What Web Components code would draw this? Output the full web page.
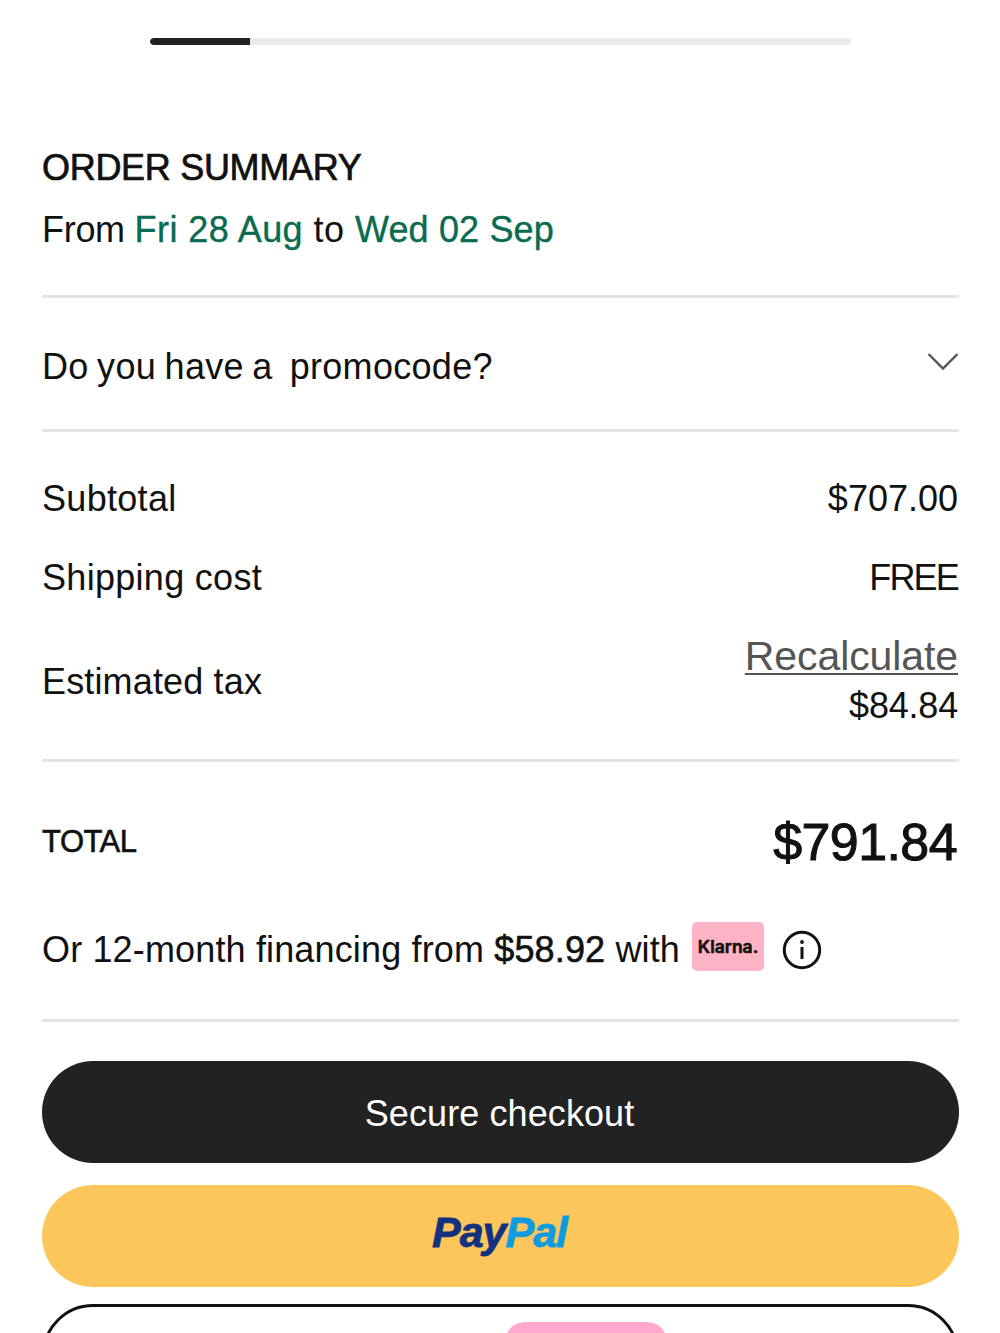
<!DOCTYPE html>
<html>
<head>
<meta charset="utf-8">
<style>
html, body { margin: 0; height: 1333px; overflow: hidden; background: #fff; }
body { font-family: "Liberation Sans", Arial, sans-serif; font-size: 36px; color: #111; }
</style>
</head>
<body>
<checkout-page>
  <checkout-progress></checkout-progress>
  <summary-heading></summary-heading>
  <promo-row></promo-row>
  <section-block pad="46px 0 32px">
    <price-row label="Subtotal" gap="37px">$707.00</price-row>
    <price-row label="Shipping cost" gap="34px"><span style="letter-spacing:-1.8px">FREE</span></price-row>
    <tax-row></tax-row>
  </section-block>
  <total-row></total-row>
  <financing-row></financing-row>
  <pay-button kind="dark">Secure checkout</pay-button>
  <pay-button kind="paypal"><paypal-logo></paypal-logo></pay-button>
  <pay-button kind="outline"></pay-button>
</checkout-page>

<script>
function shadow(el, html) {
  el.attachShadow({ mode: 'open' }).innerHTML = html;
}

class CheckoutPage extends HTMLElement {
  connectedCallback() {
    shadow(this, `<style>
      :host { display: block; padding: 0 41px 0 42px; height: 1333px; box-sizing: border-box; overflow: hidden; }
    </style><slot></slot>`);
  }
}

class CheckoutProgress extends HTMLElement {
  connectedCallback() {
    shadow(this, `<style>
      :host { display: block; padding-top: 38px; margin: 0 108px 0 108px; }
      .track { height: 7px; background: #ebebeb; border-radius: 4px; overflow: hidden; }
      .fill { width: 100px; height: 100%; background: #222; border-radius: 4px 0 0 4px; }
    </style><div class="track"><div class="fill"></div></div>`);
  }
}

class SummaryHeading extends HTMLElement {
  connectedCallback() {
    shadow(this, `<style>
      :host { display: block; padding: 102px 0 44px; border-bottom: 3px solid #e4e4e4; }
      h2 { margin: 0 0 20px; font-size: 36px; line-height: 42px; font-weight: 400; color: #111; -webkit-text-stroke: 0.7px #111; letter-spacing: -0.3px; }
      p { margin: 0; font-size: 36px; line-height: 42px; }
      b { font-weight: 400; color: #0b6b50; -webkit-text-stroke: 0.4px #0b6b50; }
      .from { letter-spacing: -0.3px; }
      .to { letter-spacing: 0.45px; }
      .d1 { letter-spacing: 0.45px; }
      .d2 { letter-spacing: 0.15px; }
    </style><h2>ORDER SUMMARY</h2><p><span class="from">From </span><b class="d1">Fri 28 Aug</b><span class="to"> to </span><b class="d2">Wed 02 Sep</b></p>`);
  }
}

class PromoRow extends HTMLElement {
  connectedCallback() {
    shadow(this, `<style>
      :host { display: flex; justify-content: space-between; align-items: center; height: 131px; border-bottom: 3px solid #e4e4e4; font-size: 36px; letter-spacing: 0.3px; word-spacing: -1.8px; }
      span { white-space: pre; margin-top: 6px; }
      svg { width: 32px; height: 20px; margin-top: -4px; }
    </style><span>Do you have a  promocode?</span>
    <svg viewBox="0 0 32 20" fill="none" stroke="#555" stroke-width="2.4"><path d="M1.5 2 16 16.5 30.5 2"/></svg>`);
  }
}

class SectionBlock extends HTMLElement {
  connectedCallback() {
    shadow(this, `<style>
      :host { display: block; padding: ${this.getAttribute('pad')}; padding-right: 1px; border-bottom: 3px solid #e4e4e4; }
    </style><slot></slot>`);
  }
}

class PriceRow extends HTMLElement {
  connectedCallback() {
    shadow(this, `<style>
      :host { display: flex; justify-content: space-between; align-items: center; height: 42px; margin-bottom: ${this.getAttribute('gap')}; line-height: 42px; font-size: 36px; }
      .l { letter-spacing: 0.3px; }
    </style><span class="l">${this.getAttribute('label')}</span><span><slot></slot></span>`);
  }
}

class TaxRow extends HTMLElement {
  connectedCallback() {
    shadow(this, `<style>
      :host { display: flex; justify-content: space-between; align-items: center; font-size: 36px; }
      .right { display: flex; flex-direction: column; align-items: flex-end; }
      a { color: #555; font-size: 41px; line-height: 46px; letter-spacing: -0.1px; text-decoration: underline; text-decoration-thickness: 2px; text-underline-offset: 3px; }
      .tax { line-height: 42px; margin-top: 6px; letter-spacing: -0.2px; }
      .label { margin-top: 4px; letter-spacing: 0.15px; }
    </style><span class="label">Estimated tax</span>
    <div class="right"><a>Recalculate</a><span class="tax">$84.84</span></div>`);
  }
}

class TotalRow extends HTMLElement {
  connectedCallback() {
    shadow(this, `<style>
      :host { display: flex; justify-content: space-between; align-items: center; height: 160px; padding-right: 2px; }
      .l { font-size: 31px; -webkit-text-stroke: 0.6px #111; letter-spacing: -0.5px; }
      .r { font-size: 52px; -webkit-text-stroke: 1px #111; letter-spacing: -0.6px; }
    </style><span class="l">TOTAL</span><span class="r">$791.84</span>`);
  }
}

class FinancingRow extends HTMLElement {
  connectedCallback() {
    shadow(this, `<style>
      :host { display: flex; align-items: center; height: 56px; padding-bottom: 41px; border-bottom: 3px solid #e4e4e4; font-size: 36px; letter-spacing: 0.15px; white-space: pre; }
      b { font-weight: 400; -webkit-text-stroke: 0.6px #111; }
      .badge { display: flex; align-items: center; justify-content: center; width: 72px; height: 49px; margin: -8px 0 0 12px; border-radius: 5px; background: #ffb3c7; font-size: 17.5px; -webkit-text-stroke: 0.6px #111; letter-spacing: 0; font-family: "Inter", "Liberation Sans", sans-serif; font-weight: 600; color: #17120f; }
      svg { width: 40px; height: 40px; margin-left: 18px; }
    </style><span>Or 12-month financing from <b>$58.92</b> with</span>
    <span class="badge">Klarna.</span>
    <svg viewBox="0 0 40 40" fill="none" stroke="#111">
      <circle cx="20" cy="20" r="17.7" stroke-width="3"/>
      <path d="M20 17v12" stroke-width="3"/>
      <circle cx="20" cy="12" r="1.9" fill="#111" stroke="none"/>
    </svg>`);
  }
}

class PayButton extends HTMLElement {
  connectedCallback() {
    const kind = this.getAttribute('kind');
    shadow(this, `<style>
      :host { display: flex; align-items: center; justify-content: center; height: 102px; border-radius: 51px; box-sizing: border-box; font-size: 36px; letter-spacing: 0.1px; overflow: hidden; }
      :host([kind=dark]) { margin-top: 39px; padding: 4px 2px 0 0; background: #222; color: #fff; }
      :host([kind=paypal]) { margin-top: 22px; background: #fcc65b; }
      :host([kind=outline]) { margin-top: 17px; border: 3px solid #111; background: #fff; align-items: flex-start; padding-top: 15px; }
      .pill { width: 162px; height: 40px; margin-left: 170px; border-radius: 20px; background: #ffa8cd; }
    </style>${kind === 'outline' ? '<div class="pill"></div>' : '<slot></slot>'}`);
  }
}

class PaypalLogo extends HTMLElement {
  connectedCallback() {
    shadow(this, `<style>
      :host { display: inline-flex; font-family: "Liberation Sans", sans-serif; font-weight: 700; font-style: italic; font-size: 43px; letter-spacing: -1px; margin: -8px 2px 0 0; }
      .a { color: #13317f; -webkit-text-stroke: 0.8px #13317f; }
      .b { color: #0f9bdf; -webkit-text-stroke: 0.8px #0f9bdf; }
    </style><span class="a">Pay</span><span class="b">Pal</span>`);
  }
}

customElements.define('checkout-page', CheckoutPage);
customElements.define('checkout-progress', CheckoutProgress);
customElements.define('summary-heading', SummaryHeading);
customElements.define('promo-row', PromoRow);
customElements.define('section-block', SectionBlock);
customElements.define('price-row', PriceRow);
customElements.define('tax-row', TaxRow);
customElements.define('total-row', TotalRow);
customElements.define('financing-row', FinancingRow);
customElements.define('pay-button', PayButton);
customElements.define('paypal-logo', PaypalLogo);
</script>
</body>
</html>
